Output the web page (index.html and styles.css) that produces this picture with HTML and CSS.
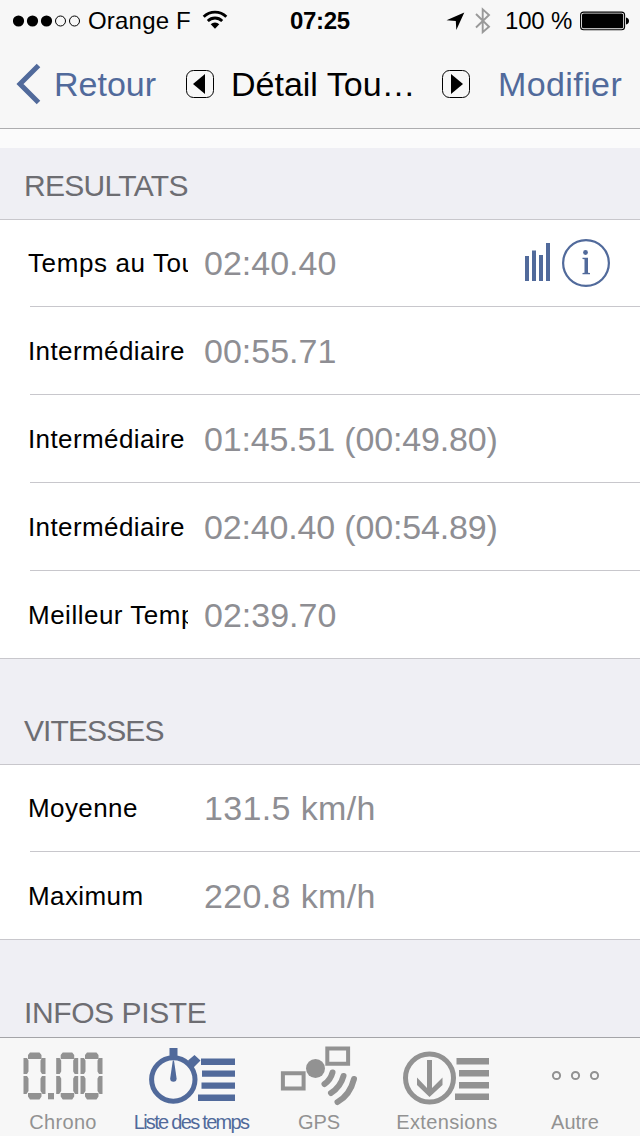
FILE: index.html
```html
<!DOCTYPE html>
<html lang="fr">
<head>
<meta charset="utf-8">
<title>Détail Tour</title>
<link rel="stylesheet" href="styles.css">
</head>
<body>
<div class="screen">
  <header class="top">
    <div class="status">
      <svg class="signal" width="68" height="12" viewBox="0 0 68 12"><g fill="#000"><circle cx="5.500" cy="6" r="5.600"/><circle cx="19.500" cy="6" r="5.600"/><circle cx="33.500" cy="6" r="5.600"/></g><g fill="none" stroke="#000"><circle cx="47.500" cy="6" r="5"/><circle cx="61.500" cy="6" r="5"/></g></svg>
      <span class="carrier">Orange F</span>
      <svg class="wifi" width="26" height="20" viewBox="0 0 26 20"><g fill="none" stroke="#000" stroke-width="2.8"><path d="M1.700 6.700a16 16 0 0 1 22.600 0"/><path d="M5.800 11a10.200 10.200 0 0 1 14.400 0"/></g><path d="M13 18.700l-4.300-4.400a6.200 6.200 0 0 1 8.600 0z"/></svg>
      <span class="clock">07:25</span>
      <svg class="locate" width="19" height="19" viewBox="0 0 19 19"><path d="M18.300.5L10.300 18 9.800 8.900.5 8.200z"/></svg>
      <svg class="bluetooth" width="16" height="28" viewBox="0 0 16 28"><path d="M1 7l13 12.700-6.300 5.500V2.400L14 8 1 20.500" fill="none" stroke="#999" stroke-width="1.900"/></svg>
      <span class="percent">100 %</span>
      <svg class="battery" width="50" height="20" viewBox="0 0 50 20"><rect x=".6" y="1.100" width="44" height="17.600" rx="3" fill="none" stroke="#000" stroke-width="1.100"/><rect x="2" y="2.500" width="41.200" height="14.800" rx="1.600"/><path d="M46 6.500q3 .8 3 3.500t-3 3.500z"/></svg>
    </div>
    <nav class="nav">
      <svg class="chevron" width="26" height="42" viewBox="0 0 26 42"><path d="M22.500 2.500L4 21l18.500 18.500" fill="none" stroke="#516a9b" stroke-width="5"/></svg>
      <span class="back">Retour</span>
      <svg class="prev" width="28" height="28" viewBox="0 0 28 28"><rect x=".5" y=".5" width="27" height="27" rx="7" fill="none" stroke="#000"/><path d="M19 4v20L7 14z"/></svg>
      <span class="title">Détail Tou…</span>
      <svg class="next" width="28" height="28" viewBox="0 0 28 28"><rect x=".5" y=".5" width="27" height="27" rx="7" fill="none" stroke="#000"/><path d="M9 4v20L21 14z"/></svg>
      <span class="edit">Modifier</span>
    </nav>
  </header>
  <main class="content">
    <h2 class="section first"><span class="results">RESULTATS</span></h2>
    <div class="row short"><span class="label lap">Temps au Tour</span><span class="value">02:40.40</span>
      <svg class="bars" width="25" height="38" viewBox="0 0 25 38"><path d="M0 13h4v25H0zM7 7.500h4V38H7zM14 12h4v26h-4zM21 0h4v38h-4z" fill="#516a9b"/></svg>
      <svg class="info" width="48" height="48" viewBox="0 0 48 48"><g fill="#516a9b"><circle cx="24" cy="24" r="22.900" fill="none" stroke="#516a9b" stroke-width="2.200"/><circle cx="23.500" cy="13.500" r="2.400"/><path d="M20.500 18.700h5.500v15l2 .4v1.200h-7.500v-1.200l2-.4V20.300l-2-.4z"/></g></svg>
    </div>
    <div class="row"><span class="label">Intermédiaire</span><span class="value">00:55.71</span></div>
    <div class="row"><span class="label">Intermédiaire</span><span class="value split">01:45.51 (00:49.80)</span></div>
    <div class="row"><span class="label">Intermédiaire</span><span class="value split">02:40.40 (00:54.89)</span></div>
    <div class="row last"><span class="label best">Meilleur Temps</span><span class="value">02:39.70</span></div>
    <h2 class="section"><span class="speeds">VITESSES</span></h2>
    <div class="row short"><span class="label">Moyenne</span><span class="value speed">131.5 km/h</span></div>
    <div class="row last"><span class="label">Maximum</span><span class="value speed">220.8 km/h</span></div>
    <h2 class="section end"><span class="track">INFOS PISTE</span></h2>
  </main>
  <footer class="tabs">
    <div class="tab">
      <svg width="128" height="70" viewBox="0 0 128 70"><defs><g id="zero"><path d="M6.500 0h9.500l2 2.500v3.800H4.500V2.500zM0 5.500h3.500L5 8v11l-1.500 2.500H0zM22 5.500h-3.500L17 8v11l1.500 2.500H22zM0 23.300h3.500L5 26v12.500l-2 3H0zM22 23.300h-3.500L17 26v12.500l2 3H22zM4.500 40.500H18V44l-2 2.800H6.500l-2-2.800z"/></g></defs><g fill="#929292"><use href="#zero" x="23.500" y="14.600"/><use href="#zero" x="56.200" y="14.600"/><use href="#zero" x="80.500" y="14.600"/><path d="M48 55h6v6.300h-6z"/></g></svg>
      <span class="name chrono">Chrono</span>
    </div>
    <div class="tab active">
      <svg width="128" height="70" viewBox="0 0 128 70"><g fill="#516a9b"><circle cx="45.300" cy="41.500" r="21.700" fill="none" stroke="#516a9b" stroke-width="5"/><path d="M41.500 10h8v9h-8zM60 22.500l6.500-5.500 6 5.500-7 7z"/><path d="M44.800 22.500h1.200l2.600 18a3.200 3.200 0 1 1-6.400 0z"/><path d="M73 20.500h34v6.500H73zM74 32.500h33v6.300H74zM73.500 44.500h33.500v6.300H73.500zM70 56.500h37v6.500H70z"/></g></svg>
      <span class="name list">Liste des temps</span>
    </div>
    <div class="tab">
      <svg width="128" height="70" viewBox="0 0 128 70"><g fill="none" stroke="#929292"><path d="M71.300 10.500h20.800v15.200H71.300zM26.900 35.300h20.700v15.200H26.900z" stroke-width="4"/><path d="M76.500 34.500q-2 7.500-8 11.500M87.500 38q-3 11-12.500 17M98 41q-4 16-16.500 23" stroke-width="6" stroke-linecap="round"/></g><circle cx="59.500" cy="30.500" r="9.500" fill="#929292"/></svg>
      <span class="name gps">GPS</span>
    </div>
    <div class="tab">
      <svg width="128" height="70" viewBox="0 0 128 70"><g fill="#929292"><circle cx="45.500" cy="40" r="24" fill="none" stroke="#929292" stroke-width="5"/><path d="M43 22h5v28l10.500-10.500V47L45.500 59 33 47v-7.500L43 50zM72.500 20h32.500v6.500H72.500zM75 32h30v6.500H75zM75 44h30v6.500H75zM71 55.500h34V62H71z"/></g></svg>
      <span class="name ext">Extensions</span>
    </div>
    <div class="tab">
      <svg width="128" height="70" viewBox="0 0 128 70"><g fill="none" stroke="#929292" stroke-width="2"><circle cx="44.500" cy="37.500" r="3.600"/><circle cx="63.500" cy="37.500" r="3.600"/><circle cx="82.500" cy="37.500" r="3.600"/></g></svg>
      <span class="name other">Autre</span>
    </div>
  </footer>
</div>
</body>
</html>
```
FILE: styles.css
```css
* { box-sizing: border-box; }
body {
  margin: 0;
  font-family: "Liberation Sans", Arial, sans-serif;
  color: #000;
}
svg { display: block; flex: none; }
span { white-space: nowrap; }
.screen {
  width: 640px;
  height: 1136px;
  display: flex;
  flex-direction: column;
  overflow: hidden;
  background: #fbfbfb;
}
.top {
  height: 129px;
  flex: none;
  background: #f7f7f7;
  border-bottom: 1px solid #adadaf;
}
.status {
  display: flex;
  align-items: center;
  height: 42px;
  padding-left: 13px;
  font-size: 24px;
}
.signal { margin-bottom: 1px; }
.carrier { width: 114px; padding-left: 7px; letter-spacing: 0.2px; }
.wifi { margin-left: 7px; margin-bottom: 2px; }
.clock { width: 60px; margin-left: 62px; font-weight: bold; letter-spacing: -0.3px; }
.locate { margin-left: 96px; }
.bluetooth { margin-left: 10px; margin-bottom: 1px; }
.percent { width: 73px; margin-left: 14px; letter-spacing: -0.2px; }
.battery { margin-left: 2px; }
.nav {
  display: flex;
  align-items: center;
  height: 84px;
  padding-left: 16px;
  font-size: 34px;
}
.back { width: 132px; margin-left: 12px; }
.title { width: 211px; margin-left: 17px; }
.edit { margin-left: 28px; letter-spacing: 0.4px; }
.back, .edit { color: #516a9b; }
.content { flex: 1; min-height: 0; padding-top: 19px; }
.section {
  display: flex;
  align-items: flex-end;
  height: 106px;
  margin: 0;
  padding: 0 0 16px 24px;
  background: #efeff4;
  border-bottom: 1px solid #c8c7cc;
  color: #6d6d72;
  font-size: 30px;
  font-weight: normal;
  line-height: 34px;
}
.section.first { height: 72px; }
.section.end { height: 97px; border-bottom: 0; padding-bottom: 7px; }
.results { letter-spacing: -0.7px; }
.speeds { letter-spacing: -0.9px; }
.track { letter-spacing: -0.4px; }
.row {
  display: flex;
  align-items: center;
  height: 88px;
  padding-left: 28px;
  background: linear-gradient(#c8c7cc, #c8c7cc) 30px 100% / 610px 1px no-repeat #fff;
}
.row.short { height: 87px; }
.row.last { background-position: 0 100%; background-size: 640px 1px; }
.label {
  width: 160px;
  overflow: hidden;
  font-size: 26px;
  letter-spacing: 0.4px;
}
.lap { letter-spacing: 0.6px; }
.best { letter-spacing: 0.5px; }
.value { width: 321px; margin-left: 16px; color: #8e8e93; font-size: 34px; }
.split { letter-spacing: -0.16px; }
.speed { letter-spacing: 0.35px; }
.bars { margin-bottom: 4px; }
.info { margin-left: 12px; margin-bottom: 2px; }
.tabs {
  display: grid;
  grid-template-columns: repeat(5, 128px);
  height: 99px;
  flex: none;
  background: #f7f7f7;
  border-top: 1px solid #a4a4a8;
}
.tab {
  display: flex;
  flex-direction: column;
  align-items: center;
  color: #929292;
  font-size: 20px;
}
.name { margin-top: 3px; padding-right: 2px; line-height: 23px; }
.chrono, .ext { letter-spacing: 0.35px; }
.active { color: #516a9b; }
.list { padding-right: 2px; letter-spacing: -1.7px; }
```
